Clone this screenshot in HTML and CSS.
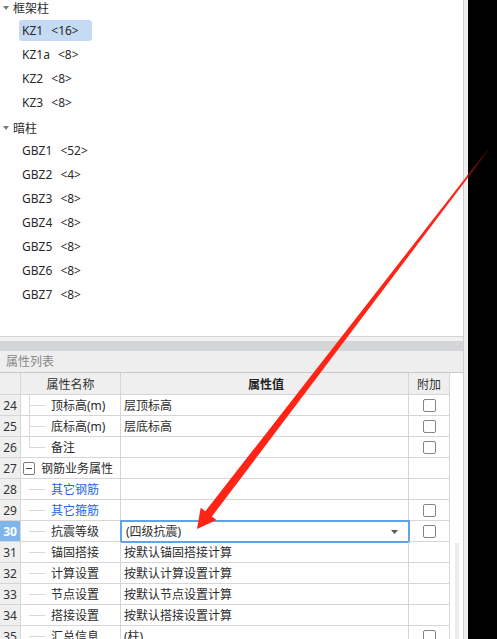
FILE: index.html
```html
<!DOCTYPE html>
<html lang="zh-CN">
<head>
<meta charset="utf-8">
<title>属性列表</title>
<link rel="stylesheet" href="styles.css">
</head>
<body>
<div class="app">
  <div class="main">
    <div class="tree">
      <div class="tree-list">
        <div class="group"><svg class="caret" width="6" height="4" viewBox="0 0 6 4"><path d="M0 0H6L3 4Z" fill="#7a7a7a"/></svg>框架柱</div>
        <div class="item"><span class="label sel">KZ1 &lt;16&gt;</span></div>
        <div class="item"><span class="label">KZ1a &lt;8&gt;</span></div>
        <div class="item"><span class="label">KZ2 &lt;8&gt;</span></div>
        <div class="item"><span class="label">KZ3 &lt;8&gt;</span></div>
        <div class="group"><svg class="caret" width="6" height="4" viewBox="0 0 6 4"><path d="M0 0H6L3 4Z" fill="#7a7a7a"/></svg>暗柱</div>
        <div class="item"><span class="label">GBZ1 &lt;52&gt;</span></div>
        <div class="item"><span class="label">GBZ2 &lt;4&gt;</span></div>
        <div class="item"><span class="label">GBZ3 &lt;8&gt;</span></div>
        <div class="item"><span class="label">GBZ4 &lt;8&gt;</span></div>
        <div class="item"><span class="label">GBZ5 &lt;8&gt;</span></div>
        <div class="item"><span class="label">GBZ6 &lt;8&gt;</span></div>
        <div class="item"><span class="label">GBZ7 &lt;8&gt;</span></div>
      </div>
    </div>
    <div class="props">
      <div class="sep"></div>
      <div class="band"></div>
      <div class="title">属性列表</div>
      <div class="grid-wrap">
        <div class="table">
          <div class="row head">
            <div class="c num"></div>
            <div class="c name center">属性名称</div>
            <div class="c val center strong">属性值</div>
            <div class="c att center attach-h">附加</div>
          </div>
          <div class="row">
            <div class="c num">24</div>
            <div class="c name"><span class="conn v"></span>顶标高(m)</div>
            <div class="c val">层顶标高</div>
            <div class="c att"><span class="cb"></span></div>
          </div>
          <div class="row">
            <div class="c num">25</div>
            <div class="c name"><span class="conn v"></span>底标高(m)</div>
            <div class="c val">层底标高</div>
            <div class="c att"><span class="cb"></span></div>
          </div>
          <div class="row">
            <div class="c num">26</div>
            <div class="c name"><span class="conn vl"></span>备注</div>
            <div class="c val"></div>
            <div class="c att"><span class="cb"></span></div>
          </div>
          <div class="row">
            <div class="c num">27</div>
            <div class="c name"><span class="minus"><span class="bar"></span></span><span class="grp-text">钢筋业务属性</span></div>
            <div class="c val"></div>
            <div class="c att"></div>
          </div>
          <div class="row">
            <div class="c num">28</div>
            <div class="c name link"><span class="conn"></span>其它钢筋</div>
            <div class="c val"></div>
            <div class="c att"></div>
          </div>
          <div class="row">
            <div class="c num">29</div>
            <div class="c name link"><span class="conn"></span>其它箍筋</div>
            <div class="c val"></div>
            <div class="c att"><span class="cb"></span></div>
          </div>
          <div class="row">
            <div class="c num active">30</div>
            <div class="c name"><span class="conn"></span>抗震等级</div>
            <div class="c val editing">(四级抗震)<span class="editor"><svg class="dd" width="7" height="4" viewBox="0 0 7 4"><path d="M0 0H7L3.5 4Z" fill="#555a66"/></svg></span></div>
            <div class="c att"><span class="cb"></span></div>
          </div>
          <div class="row">
            <div class="c num">31</div>
            <div class="c name"><span class="conn"></span>锚固搭接</div>
            <div class="c val">按默认锚固搭接计算</div>
            <div class="c att"></div>
          </div>
          <div class="row">
            <div class="c num">32</div>
            <div class="c name"><span class="conn"></span>计算设置</div>
            <div class="c val">按默认计算设置计算</div>
            <div class="c att"></div>
          </div>
          <div class="row">
            <div class="c num">33</div>
            <div class="c name"><span class="conn"></span>节点设置</div>
            <div class="c val">按默认节点设置计算</div>
            <div class="c att"></div>
          </div>
          <div class="row">
            <div class="c num">34</div>
            <div class="c name"><span class="conn"></span>搭接设置</div>
            <div class="c val">按默认搭接设置计算</div>
            <div class="c att"></div>
          </div>
          <div class="row">
            <div class="c num">35</div>
            <div class="c name"><span class="conn"></span>汇总信息</div>
            <div class="c val">(柱)</div>
            <div class="c att"><span class="cb"></span></div>
          </div>
        </div>
        <div class="vscroll"><div class="thumb"></div></div>
      </div>
    </div>
  </div>
  <div class="gutter"></div>
  <div class="dark"></div>
</div>
<svg class="arrow" width="497" height="639" viewBox="0 0 497 639">
  <defs>
    <linearGradient id="fade" gradientUnits="userSpaceOnUse" x1="467.5" y1="176.5" x2="488" y2="150">
      <stop offset="0" stop-color="#ff2416"/>
      <stop offset="0.02" stop-color="#8c120c"/>
      <stop offset="1" stop-color="#220202"/>
    </linearGradient>
  </defs>
  <polygon fill="url(#fade)" points="197,529 200.7,507.8 205.3,511.3 487.5,149.6 488.5,150.4 211.9,516.5 216.5,520"/>
</svg>
</body>
</html>
```

FILE: styles.css
```css
html, body {
  margin: 0;
  padding: 0;
}
body {
  width: 497px;
  height: 639px;
  overflow: hidden;
  position: relative;
  font-family: "Noto Sans", "Noto Sans CJK SC", sans-serif;
  font-size: 12px;
  color: #2b2b2b;
  background: #000;
}
.app {
  display: flex;
  height: 639px;
  overflow: hidden;
}
.main {
  width: 463px;
  height: 639px;
  display: flex;
  flex-direction: column;
  background: #fff;
  overflow: hidden;
}
.gutter {
  width: 4px;
  border-left: 1px solid #cfcfcf;
  background: #efefef;
}
.dark {
  flex: 1;
  background: #000;
}

/* tree */
.tree {
  height: 336px;
  flex-shrink: 0;
  overflow: hidden;
  background: #fff;
}
.tree-list {
  margin-top: -4px;
}
.group {
  height: 24px;
  display: flex;
  align-items: center;
}
.caret {
  margin-left: 3px;
  margin-right: 4px;
}
.item {
  height: 24px;
  display: flex;
  align-items: center;
  padding-left: 19px;
}
.label {
  height: 21px;
  line-height: 21px;
  padding: 0 3px;
  border-radius: 3px;
  margin-top: -3px;
  word-spacing: 5px;
}
.label.sel {
  background: #c5dbf3;
  padding-right: 13px;
}

/* props */
.props {
  flex: 1;
  display: flex;
  flex-direction: column;
  background: #fff;
  min-height: 0;
}
.sep {
  height: 4px;
  flex-shrink: 0;
  border-top: 1px solid #d6d6d6;
  background: #f1f1f1;
}
.band {
  height: 10px;
  flex-shrink: 0;
  background: #d4d5d9;
}
.title {
  height: 21px;
  flex-shrink: 0;
  line-height: 21px;
  padding-left: 6px;
  background: #eeeeee;
  color: #8a8a8a;
  border-bottom: 1px solid #c9c9c9;
}
.grid-wrap {
  display: flex;
  flex: 1;
  min-height: 0;
}
.table {
  width: 450px;
  flex-shrink: 0;
}
.row {
  display: grid;
  grid-template-columns: 21px 100px 288px 41px;
  height: 21px;
}
.row.head {
  height: 22px;
}
.c {
  box-sizing: border-box;
  border-right: 1px solid #d6d6d6;
  border-bottom: 1px solid #d6d6d6;
  display: flex;
  align-items: center;
  white-space: nowrap;
  position: relative;
}
.head .c {
  background: #efefef;
  color: #333;
}
.head .strong {
  color: #222;
  font-weight: 600;
}
.center {
  justify-content: center;
}
.attach-h {
  color: #4a5a70;
}
.num {
  background: #efefef;
  justify-content: center;
  color: #333;
}
.num.active {
  background: #80b5ec;
  color: #fff;
  font-weight: bold;
}
.link {
  color: #1e66e6;
}
.val {
  padding-left: 3px;
}
.val.editing {
  padding-left: 5px;
}
.editor {
  position: absolute;
  left: -1px;
  right: -2px;
  top: -1px;
  bottom: -2px;
  border: 2px solid #62a3e5;
  box-sizing: border-box;
  display: flex;
  align-items: center;
  justify-content: flex-end;
  padding-right: 10px;
}
.dd {
  display: block;
}
.att {
  justify-content: center;
}
.cb {
  width: 13px;
  height: 13px;
  box-sizing: border-box;
  border: 1px solid #858585;
  border-radius: 2px;
  background: #fff;
}
.conn {
  width: 16px;
  margin-left: 8px;
  margin-right: 6px;
  align-self: stretch;
  position: relative;
}
.conn::after {
  content: "";
  position: absolute;
  left: 0;
  right: 0;
  top: 50%;
  border-top: 1px solid #d9d9d9;
}
.conn.v::before,
.conn.vl::before {
  content: "";
  position: absolute;
  left: 0;
  top: -1px;
  bottom: -1px;
  border-left: 1px solid #d9d9d9;
}
.conn.vl::before {
  bottom: auto;
  height: calc(50% + 1px);
}
.minus {
  width: 12px;
  height: 13px;
  box-sizing: border-box;
  border: 1px solid #7a7a7a;
  border-radius: 2px;
  margin-left: 2px;
  display: flex;
  align-items: center;
  justify-content: center;
}
.minus .bar {
  width: 6px;
  height: 1px;
  background: #444;
}
.grp-text {
  margin-left: 6px;
}
.vscroll {
  flex: 1;
  padding-top: 170px;
  padding-left: 5px;
  box-sizing: border-box;
  display: flex;
}
.thumb {
  width: 4px;
  background: #ebebeb;
}
.arrow {
  position: absolute;
  left: 0;
  top: 0;
  pointer-events: none;
}
```
